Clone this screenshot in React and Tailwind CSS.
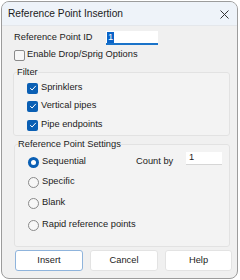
import React from "react";

const font = { fontFamily: "'Liberation Sans', Arial, sans-serif" };

const CheckBox = ({ checked }) =>
  checked ? (
    <span className="flex h-[11px] w-[11px] shrink-0 items-center justify-center rounded-[2px] bg-[#0a5fb4]">
      <svg width="8" height="8" viewBox="0 0 8 8">
        <path d="M1.2 4.2 L3.1 6 L6.8 1.9" fill="none" stroke="white" strokeWidth="1" />
      </svg>
    </span>
  ) : (
    <span className="h-[11px] w-[11px] shrink-0 rounded-[2px] border border-[#8a8a8a] bg-[#f7f7f7]" />
  );

const Radio = ({ checked }) =>
  checked ? (
    <span className="flex h-[11px] w-[11px] shrink-0 items-center justify-center rounded-full bg-[#0a5fb4]">
      <span className="h-[5px] w-[5px] rounded-full bg-white" />
    </span>
  ) : (
    <span className="h-[11px] w-[11px] shrink-0 rounded-full border border-[#8a8a8a] bg-[#f7f7f7]" />
  );

const App = () => {
  const radios = [
    { label: "Specific", mt: "mt-[8px]" },
    { label: "Blank", mt: "mt-[9px]" },
    { label: "Rapid reference points", mt: "mt-[10px]" },
  ];

  return (
    <div className="h-[280px] w-[240px] bg-white pl-[1px] pt-[1px] text-[9.3px] text-[#1b1b1b]" style={font}>
      <div className="flex h-[278px] w-[237px] flex-col overflow-hidden rounded-[8px] border border-[#9c9c9c] bg-[#f0f0f0]">
        <div className="flex h-[24px] shrink-0 items-center justify-between border-b border-[#e4e7eb] bg-[#eef3f9] pl-[6px] pr-[8px]">
          <span className="text-[10.2px]">Reference Point Insertion</span>
          <svg width="9" height="9" viewBox="0 0 9 9" className="mt-[1px]">
            <path d="M0.5 0.5 L8.5 8.5 M8.5 0.5 L0.5 8.5" stroke="#333" strokeWidth="1" />
          </svg>
        </div>

        <div className="flex flex-col pl-[12px]">
          <div className="mt-[5px] flex h-[14px] items-center">
            <span className="w-[92px]">Reference Point ID</span>
            <div className="flex h-[14px] w-[52px] items-center border-b-2 border-[#1a73c9] bg-white">
              <span className="ml-[1px] bg-[#0a64c8] px-[1px] leading-[11px] text-white">1</span>
            </div>
          </div>

          <div className="mt-[4px] flex h-[12px] items-center gap-[2px]">
            <CheckBox />
            <span>Enable Drop/Sprig Options</span>
          </div>

          <fieldset className="ml-[-1px] mt-[5px] h-[70px] w-[217px] rounded-[3px] border border-[#e2e2e2] bg-[#f3f3f3]">
            <legend className="ml-[3px] px-0 leading-[13px]">Filter</legend>
            <div className="pl-[13px]">
              <div className="mt-[3px] flex h-[12px] items-center gap-[3px]">
                <CheckBox checked />
                <span>Sprinklers</span>
              </div>
              <div className="mt-[6px] flex h-[12px] items-center gap-[3px]">
                <CheckBox checked />
                <span>Vertical pipes</span>
              </div>
              <div className="mt-[7px] flex h-[12px] items-center gap-[3px]">
                <CheckBox checked />
                <span>Pipe endpoints</span>
              </div>
            </div>
          </fieldset>

          <fieldset className="mt-[2px] h-[109px] w-[216px] rounded-[3px] border border-[#e2e2e2] bg-[#f3f3f3]">
            <legend className="ml-[3px] px-0 leading-[13px]">Reference Point Settings</legend>
            <div className="pl-[13px]">
              <div className="mt-[5px] flex h-[12px] items-center">
                <div className="flex w-[108px] items-center gap-[3px]">
                  <Radio checked />
                  <span>Sequential</span>
                </div>
                <span className="w-[50px]">Count by</span>
                <div className="mt-[-7px] flex h-[13px] w-[36px] items-center border-b border-[#d6d6d6] bg-white pl-[3px]">
                  1
                </div>
              </div>
              {radios.map((r) => (
                <div key={r.label} className={r.mt + " flex h-[12px] items-center gap-[3px]"}>
                  <Radio />
                  <span>{r.label}</span>
                </div>
              ))}
            </div>
          </fieldset>

          <div className="mt-[3px] flex gap-[7px] pl-[1px]">
            <button className="h-[21px] w-[68px] rounded-[3px] border border-[#8fb4dc] bg-white">
              Insert
            </button>
            <button className="h-[21px] w-[68px] rounded-[3px] border border-[#e3e3e3] bg-white">
              Cancel
            </button>
            <button className="h-[21px] w-[67px] rounded-[3px] border border-[#e3e3e3] bg-white">
              Help
            </button>
          </div>
        </div>
      </div>
    </div>
  );
};

export default App;
